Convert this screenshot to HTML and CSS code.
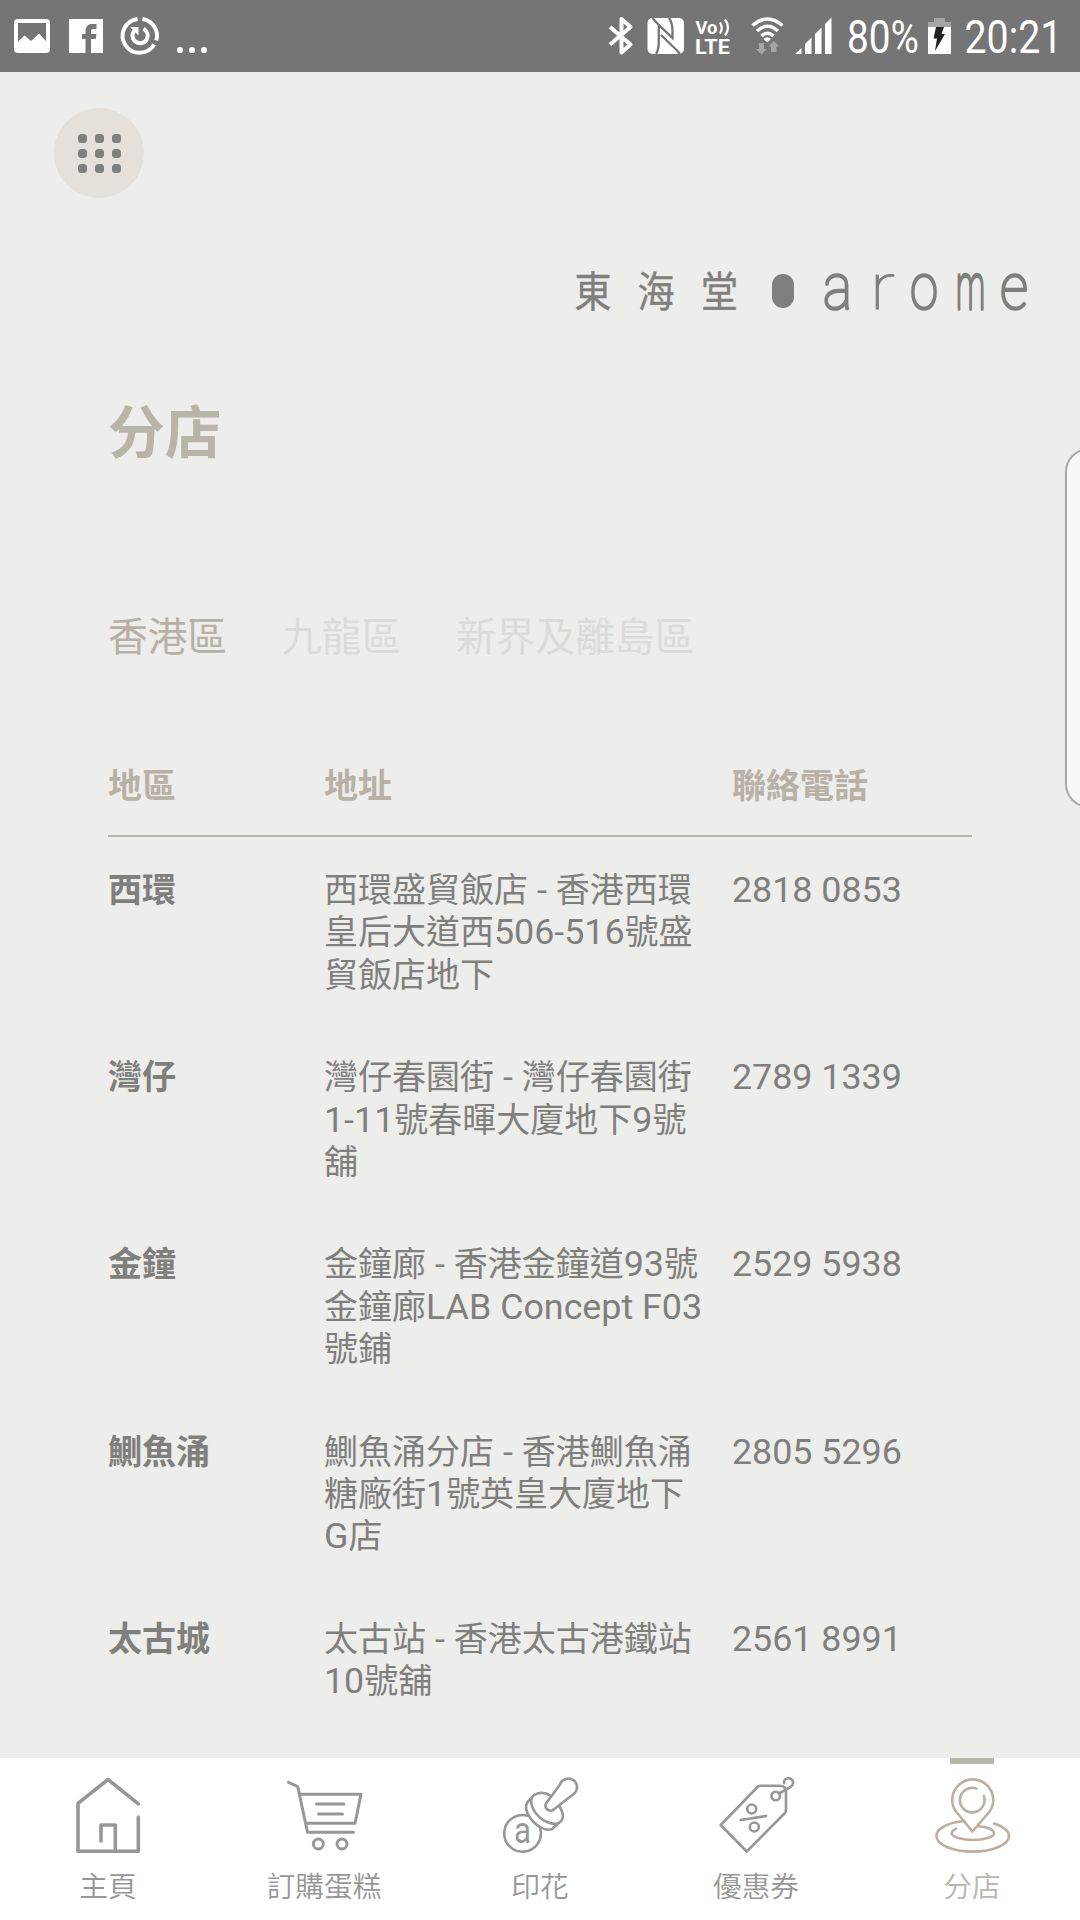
FILE: index.html
```html
<!DOCTYPE html>
<html lang="zh-Hant-HK">
<head>
<meta charset="utf-8">
<title>分店</title>
<link rel="stylesheet" href="styles.css">
</head>
<body>
<div class="screen">
  <header class="status">
    <svg class="status-left" width="220" height="72" viewBox="0 0 220 72">
      <rect x="14" y="19" width="36" height="34" rx="4" fill="#fff"/>
      <path d="M18 23H46V41L39 33.500L31 41L24.500 35.500L18 41.500Z" fill="#757575"/>
      <rect x="69" y="19" width="34" height="34" fill="#fff"/>
      <path d="M85.500 53V39H82V34H85.500V31.500C85.500 26.500 88 24 92 24H96.500V29H93.500C91.800 29 91 29.800 91 31.500V34H96.500L95.800 39H91V53Z" fill="#757575"/>
      <g fill="none" stroke="#fff" stroke-width="4">
        <path d="M142.500 18.900A17 17 0 0 1 156.300 40.500M154.200 44.500A17 17 0 1 1 137.500 18.900"/>
        <path d="M143.500 28.800A7.600 7.600 0 1 1 134.500 30.500"/>
      </g>
      <path d="M130 27H138.500V35.500Z" fill="#fff"/>
      <g fill="#fff"><circle cx="180" cy="50" r="3.100"/><circle cx="192" cy="50" r="3.100"/><circle cx="204" cy="50" r="3.100"/></g>
    </svg>
    <svg class="status-right" width="490" height="72" viewBox="0 0 490 72">
      <path d="M20 27L40.500 44.500L31.500 52.500V19L40.500 27L20 44.500" fill="none" stroke="#fff" stroke-width="4" stroke-linejoin="round"/>
      <rect x="57.500" y="18" width="36.500" height="36" rx="5" fill="#fff"/>
      <path d="M66 54C68.500 50 68.800 46 68.800 42V25L82.500 38V31C82.500 26 82 22 79 18M68.800 25L62.500 18M71 35L84.500 48C88 51 88 52 90 54" fill="none" stroke="#757575" stroke-width="2.300"/>
      <text class="cond bold" x="105.500" y="34" font-size="19" textLength="22" lengthAdjust="spacingAndGlyphs">Vo</text>
      <path d="M130 22.500Q133.500 28 130 33.500M135 19.500Q141 28 135 35.500" fill="none" stroke="#fff" stroke-width="2.200"/>
      <text class="cond bold" x="105" y="54" font-size="20.500" textLength="35" lengthAdjust="spacingAndGlyphs">LTE</text>
      <g fill="none" stroke="#fff" stroke-width="3.400">
        <path d="M162.500 25.500Q177.300 12.500 192.500 25.500"/><path d="M167 31Q177.300 21.500 188 31"/><path d="M171.500 36Q177.300 30.500 183.500 36"/>
      </g>
      <path d="M173.500 39Q177.300 35.500 181 39L177.300 42.500Z" fill="#fff"/>
      <path d="M169 43H174V49H177L171.500 54.500L166 49H169ZM181 52H186.500V46.500H189.500L183.800 41L178.500 46.500H181Z" fill="#a5a5a5"/>
      <path d="M205 54L211.500 48V54ZM215 54V44L221.500 37.500V54ZM225 54V34L231.500 27.500V54ZM235 54V24L241.500 17.500V54Z" fill="#fff"/>
      <text class="cond" x="257" y="53" font-size="46" textLength="72" lengthAdjust="spacingAndGlyphs">80%</text>
      <path d="M338 27V22H344V18H355V22H361V27Z" fill="#a5a5a5"/>
      <rect x="338" y="27" width="23" height="27" fill="#fff"/>
      <path d="M346 27H354L351.500 34H355L345 51L347 38.500H343.500Z" fill="#222"/>
      <text class="cond" x="374.500" y="53" font-size="46" textLength="98" lengthAdjust="spacingAndGlyphs">20:21</text>
    </svg>
  </header>

  <main class="page">
    <button class="menu" aria-label="選單"><i></i><i></i><i></i><i></i><i></i><i></i><i></i><i></i><i></i></button>

    <svg class="logo" width="470" height="90" viewBox="0 -20 470 90">
      <g class="logo-han" font-size="41.500">
        <text x="4.500" y="43" textLength="37" lengthAdjust="spacingAndGlyphs">東</text>
        <text x="67.500" y="43" textLength="37" lengthAdjust="spacingAndGlyphs">海</text>
        <text x="131" y="43" textLength="37" lengthAdjust="spacingAndGlyphs">堂</text>
      </g>
      <rect x="202" y="10" width="22" height="34" rx="11" ry="11"/>
      <g class="logo-latin" font-size="65">
        <text x="253" y="45" textLength="29" lengthAdjust="spacingAndGlyphs">a</text>
        <text class="logo-r" x="300" y="45" textLength="25" lengthAdjust="spacingAndGlyphs">r</text>
        <text x="340" y="45" textLength="28" lengthAdjust="spacingAndGlyphs">o</text>
        <text class="logo-m" x="386" y="45" textLength="29" lengthAdjust="spacingAndGlyphs">m</text>
        <text x="430" y="45" textLength="28" lengthAdjust="spacingAndGlyphs">e</text>
      </g>
    </svg>

    <h1 class="title">分店</h1>

    <nav class="tabs">
      <a class="tab tab-on">香港區</a><a class="tab">九龍區</a><a class="tab">新界及離島區</a>
    </nav>

    <table class="branches">
      <colgroup><col class="c-area"><col class="c-addr"><col class="c-tel"></colgroup>
      <thead><tr><th>地區</th><th>地址</th><th>聯絡電話</th></tr></thead>
      <tbody>
        <tr><th>西環</th><td>西環盛貿飯店<b> - </b>香港西環<br>皇后大道西<b>506-516</b>號盛<br>貿飯店地下</td><td><b>2818 0853</b></td></tr>
        <tr><th>灣仔</th><td>灣仔春園街<b> - </b>灣仔春園街<br><b>1-11</b>號春暉大廈地下<b>9</b>號<br>舖</td><td><b>2789 1339</b></td></tr>
        <tr><th>金鐘</th><td>金鐘廊<b> - </b>香港金鐘道<b>93</b>號<br>金鐘廊<b>LAB Concept F03</b><br>號鋪</td><td><b>2529 5938</b></td></tr>
        <tr><th>鰂魚涌</th><td>鰂魚涌分店<b> - </b>香港鰂魚涌<br>糖廠街<b>1</b>號英皇大廈地下<br><b>G</b>店</td><td><b>2805 5296</b></td></tr>
        <tr><th>太古城</th><td>太古站<b> - </b>香港太古港鐵站<br><b>10</b>號舖</td><td><b>2561 8991</b></td></tr>
      </tbody>
    </table>
  </main>

  <nav class="bottom">
    <a class="item">
      <svg viewBox="0 0 80 80" stroke-width="3.600"><path d="M70.300 27.800L40 3.500L10 27.300V75.300H70.300V41M33 65V49H47.300V75"/></svg>
      <span>主頁</span>
    </a>
    <a class="item">
      <svg viewBox="0 0 80 80" stroke-width="3"><path d="M4.500 6.300L13.700 10.500L23.500 56.300H69.500M16.700 18.300H77L71 47.300H22M32.500 28H60M34.500 38H58.500"/><circle cx="34.300" cy="68" r="5"/><circle cx="58" cy="68" r="5"/></svg>
      <span>訂購蛋糕</span>
    </a>
    <a class="item">
      <svg viewBox="0 0 80 80" stroke-width="2.600"><path d="M46 27.500L60 8.500A8.700 8.700 0 1 1 73 18.500L54 33.200A5 5 0 0 1 46 27.500Z"/><path d="M59 29.500C63 36 64.500 43 59.500 46.500C53 50.500 42 45 36 37.500C30 29.500 30 22 34 19.200C39 15.500 46 16.500 51 20M33 20L28.500 25C24.500 29 25.500 36 31 43C37 51 46 55.500 52 53L60 46"/><path d="M27.500 39.800A18.300 18.300 0 1 0 40.300 53"/><text class="stamp-a" x="14" y="66.500" font-size="36" textLength="17" lengthAdjust="spacingAndGlyphs">a</text></svg>
      <span>印花</span>
    </a>
    <a class="item">
      <svg viewBox="0 0 80 80" stroke-width="2.600"><path d="M4.700 49L42 10.500Q43 9.700 45 9.700H64Q70 9.700 70 15.700V34Q70 36 68.500 37.500L30.700 75.500ZM24.700 44L50 40M63 17.500L74.500 11C79 7.500 77 2.500 72.500 2.300C69.500 2.200 68 4 68 7"/><circle cx="59.700" cy="20" r="4.300"/><circle cx="35.700" cy="33" r="4.500"/><circle cx="38.300" cy="51" r="4.500"/></svg>
      <span>優惠券</span>
    </a>
    <a class="item item-on">
      <svg viewBox="0 0 80 80" stroke-width="2.600"><path d="M40.500 55.500L23.500 35A20.500 20.500 0 1 1 58 35Z"/><path d="M51.800 20A12.300 12.300 0 1 1 44.500 12.600M62 47.500C71 50.500 77 55 77 60C77 68.500 61 75.600 40.700 75.600S4.400 68.500 4.400 60C4.400 52.500 16 46.500 32.300 45M46 50.200C55 50.500 62 53.500 62 57.500C62 61 52 64 41 64S19.700 61 19.700 57.300C19.700 55.500 21.500 54 24 52.700"/></svg>
      <span>分店</span>
    </a>
  </nav>
  <div class="edge-handle"></div>
</div>
</body>
</html>
```

FILE: styles.css
```css
* { box-sizing: border-box; margin: 0; padding: 0; }

body {
  font-family: Roboto, "Noto Sans CJK TC", sans-serif;
  background: #ededeb;
  color: #7f7f7e;
}

.screen {
  position: relative;
  display: flex;
  flex-direction: column;
  width: 1080px;
  height: 1920px;
  overflow: hidden;
}

.status {
  display: flex;
  justify-content: space-between;
  height: 72px;
  flex: none;
  background: #757575;
}
.status svg { display: block; }
.cond { font-family: Roboto, sans-serif; fill: #fff; }
.bold { font-weight: 700; }

.page {
  flex: 1;
  min-height: 0;
  display: flex;
  flex-direction: column;
  padding: 36px 108px 0;
}

.menu {
  display: grid;
  grid-template-columns: repeat(3, 9px);
  grid-auto-rows: 9px;
  gap: 6px 8px;
  place-content: center;
  width: 90px;
  height: 90px;
  margin-left: -54px;
  border: 0;
  border-radius: 50%;
  background: #e5e0da;
}
.menu i { border-radius: 3.5px; background: #7f7f7e; }

.logo {
  display: block;
  flex: none;
  align-self: flex-end;
  margin: 46px -68px 0 0;
  fill: #7f7f7e;
}
.logo-han { font-family: "Noto Sans CJK TC", sans-serif; stroke: #7f7f7e; stroke-width: .4px; }
.logo-latin {
  font-family: Roboto, sans-serif;
  font-weight: 100;
  stroke: #7f7f7e;
  stroke-width: 2.6px;
  stroke-linejoin: round;
}
.logo-r { stroke-width: 1px; }
.logo-m { stroke-width: 3.6px; }

.title {
  margin-top: 65px;
  font-size: 56.7px;
  line-height: 70px;
  font-weight: 700;
  color: #b8b4a7;
}

.tabs {
  display: flex;
  gap: 55px;
  margin-top: 144px;
  font-size: 39.7px;
  line-height: 50px;
}
.tab { color: #dcdbd9; }
.tab-on { color: #b8b0a6; }

.branches {
  width: 864px;
  margin-top: 102px;
  table-layout: fixed;
  border-collapse: collapse;
  font-size: 34px;
  line-height: 42.2px;
  text-align: left;
}
.c-area { width: 216px; }
.c-addr { width: 408px; }
.branches th, .branches td { vertical-align: top; white-space: nowrap; }
.branches thead th { padding-bottom: 28px; border-bottom: 2px solid #b9b6aa; color: #b9b0a6; }
.branches tbody th, .branches tbody td { padding: 32px 0 28.5px; }
.branches th { font-weight: 700; }

/* Latin letters and digits run slightly larger than the Han text */
.branches b { font-weight: 400; font-size: 35.8px; line-height: 1; }

.bottom {
  display: flex;
  flex: none;
  height: 162px;
  background: #fff;
}
.item {
  position: relative;
  flex: 1;
  display: flex;
  flex-direction: column;
  align-items: center;
  padding-top: 18px;
  color: #979797;
  font-size: 28.7px;
  line-height: 36px;
}
.item svg { width: 80px; height: 80px; fill: none; stroke: currentColor; stroke-linecap: round; stroke-linejoin: round; }
.item span { margin-top: 13px; font-weight: 350; }
.item .stamp-a { font-family: Roboto, sans-serif; font-weight: 400; fill: currentColor; stroke: none; }
.item-on { color: #b9b5ab; }
.item-on svg { color: #bcaea2; }
.item-on::before {
  content: "";
  position: absolute;
  top: 0;
  left: 86px;
  width: 44px;
  height: 6px;
  background: #b6b5a8;
}

.edge-handle {
  position: absolute;
  left: 1065px;
  top: 448px;
  width: 60px;
  height: 360px;
  border: 2px solid #a8a8a8;
  border-radius: 24px;
  background: #f8f8f6;
}
```
